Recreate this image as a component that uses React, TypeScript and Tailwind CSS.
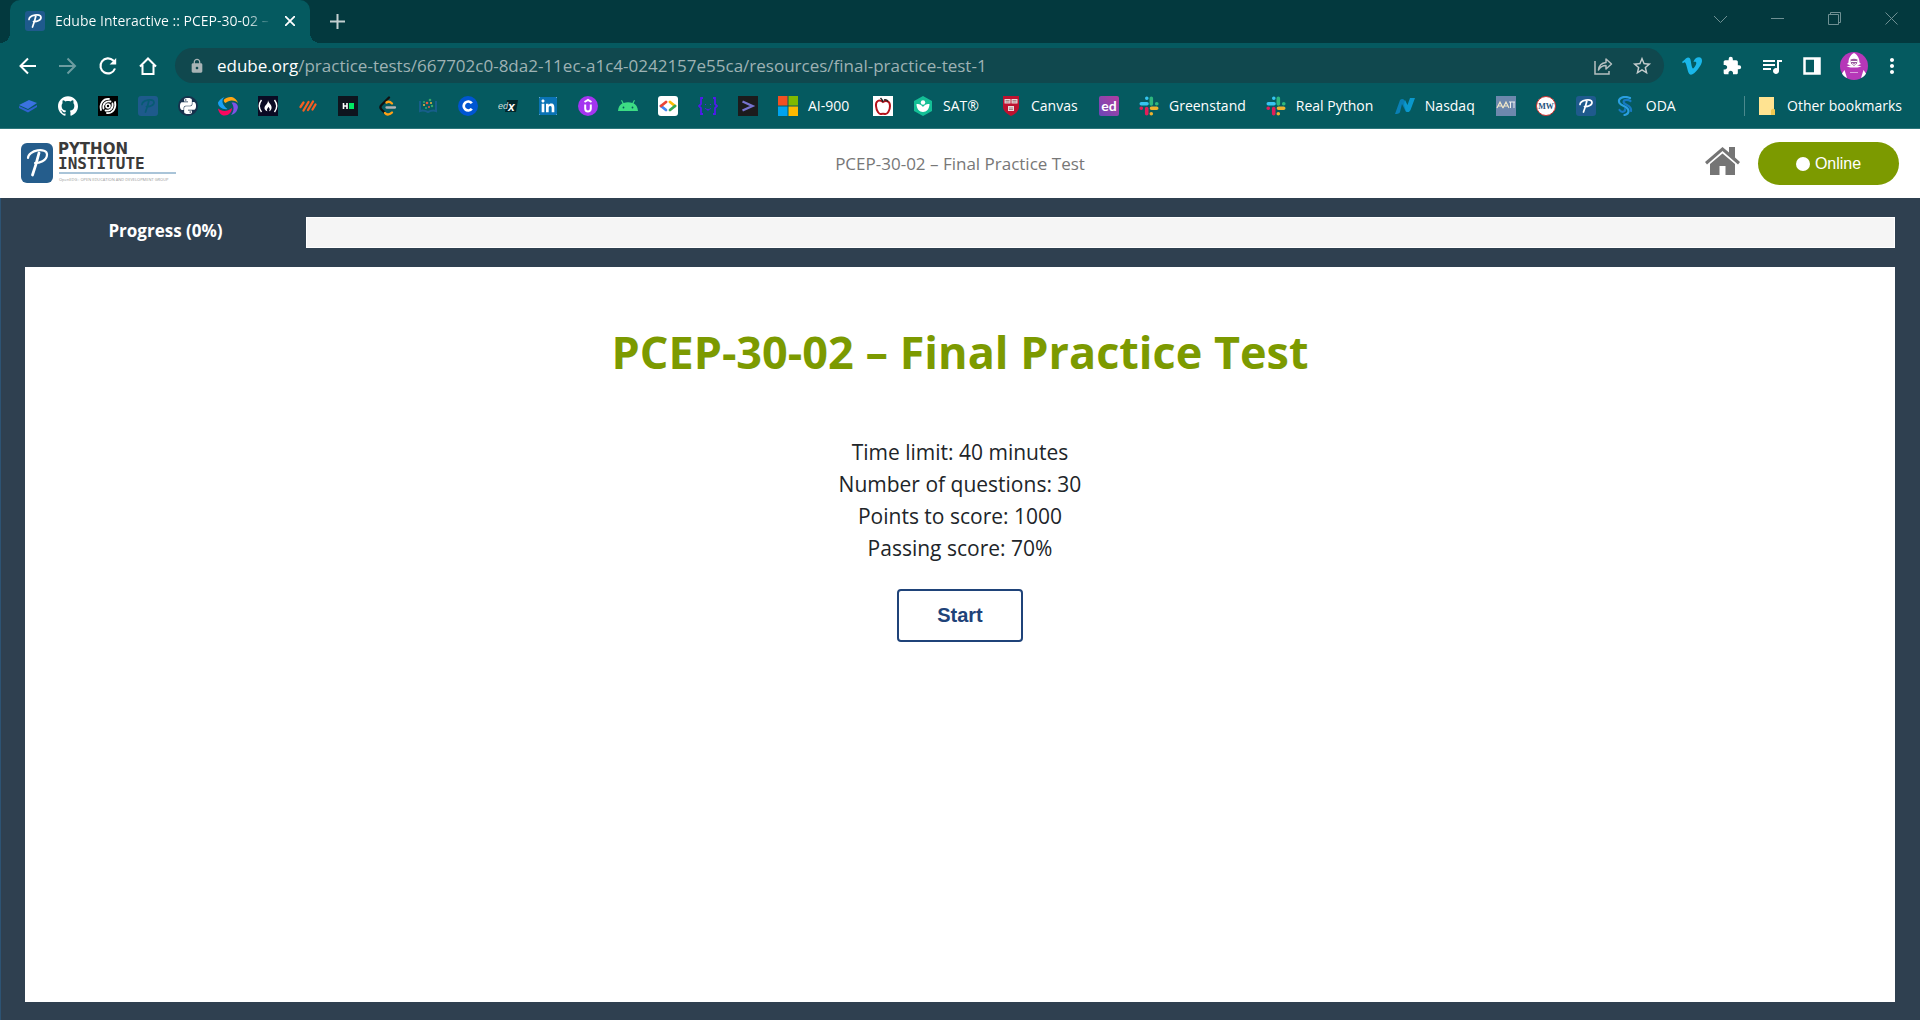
import React from "react";
import { SiGithub, SiPython, SiVimeo, SiLinkedin } from "react-icons/si";
import { MdLock, MdStarOutline, MdExtension, MdQueueMusic, MdMoreVert } from "react-icons/md";

function PMark({ bg, fg }: { bg: string; fg: string }) {
  return (
    <svg viewBox="0 0 20 20" className="size-5 shrink-0" aria-hidden="true">
      <rect width="20" height="20" rx="3" fill={bg} />
      <path d="M4 8.500C4 4 15.500 2 16 6C16.300 9.500 11 11 8.500 10.500M11 4.500C10 9 9 12 7.500 16" fill="none" stroke={fg} strokeWidth="1.700" strokeLinecap="round" />
    </svg>
  );
}

function Box({ children }: { children: React.ReactNode }) {
  return (
    <svg viewBox="0 0 20 20" className="size-5 shrink-0" aria-hidden="true">
      {children}
    </svg>
  );
}

function Slack() {
  return (
    <Box>
      <g strokeWidth="3.600" strokeLinecap="round">
        <path d="M2.300 7.700H8M7.800 2.200V2.300" stroke="#36c5f0" />
        <path d="M12.300 2.300V8M17.800 7.800H17.700" stroke="#2eb67d" />
        <path d="M12.500 12.300H17.700M12.300 17.700V17.800" stroke="#ecb22e" />
        <path d="M7.700 12.500V17.700M2.200 12.300H2.300" stroke="#e01e5a" />
      </g>
    </Box>
  );
}

type Mark = { name: string; label?: string; width?: string; icon: React.ReactNode };

const marks: Mark[] = [
  { name: "Courses", icon: <Box><path d="M1 9 11 4l8 3-9 6z" fill="#3b72e0" /><path d="m1 10 9 4 9-5v2l-9 5.500L1 12z" fill="#2f62cf" /></Box> },
  { name: "GitHub", icon: <SiGithub className="size-5 shrink-0 text-white" /> },
  { name: "Spiral", icon: <Box><rect width="20" height="20" fill="#000" /><g fill="none" stroke="#fff" strokeLinecap="round"><circle cx="10" cy="10" r="2" strokeWidth="1.600" /><path d="M3 14C1.500 8 5 2.500 11 3M17 6c1.500 6-2 11.500-8 11" strokeWidth="1.800" /><path d="M5.500 12.500C4.500 8 8 4.500 12.500 5.500M14.500 7.500c1 4.500-2.500 8-7 7" strokeWidth="1.800" /></g></Box> },
  { name: "Python Institute", icon: <PMark bg="#1e5a8c" fg="#075b73" /> },
  { name: "PySchool", icon: <span className="grid size-5 shrink-0 place-items-center rounded-full bg-[#17324d]"><SiPython className="size-4 text-white" /></span> },
  { name: "Sololearn", icon: <Box><path d="M6.500 1C3 4 4 9 9.500 13 5 14 0 11 0 6.500 1.500 4 3.500 2 6.500 1z" fill="#18a0f5" /><path d="M6 3.500C10 0 17-1 20 7c-4-3.500-9-3-12.500 0C6 6.500 5.500 5 6 3.500z" fill="#ffa514" /><path d="M13.500 6.500C18 6 21 9 19.500 13c-.8 3-3.500 5.500-6.500 6 3-3.500 3.500-8 .5-12.500z" fill="#7d52e6" /><path d="M0 12.500c4 3 9 3.500 14-.5C14 17 9 21 4 19 2 18 .5 15.500 0 12.500z" fill="#f8075f" /></Box> },
  { name: "freeCodeCamp", icon: <Box><rect width="20" height="20" fill="#0a0a23" /><g fill="none" stroke="#fff" strokeWidth="1.400"><path d="M3.500 4C.5 8 .5 12 3.500 16M16.500 4c3 4 3 8 0 12" /></g><path d="M10 4c0 3 4.500 5 3.500 8.500-.4 1.700-1.500 2.500-2.500 2.700 1.500-2 .5-3-.8-4.400C10 13 8 13 9.500 15.200 5 14 6.500 10 8 9c1.500-1.500 2-3 2-5z" fill="#fff" /></Box> },
  { name: "Stripes", icon: <Box><g stroke="#f65e22" strokeWidth="2.300" strokeLinecap="round"><path d="m2.500 11 3-4.500M5.500 14.500l5-8.500M10 14l5-8.500M14.500 13.500l3-5" /></g></Box> },
  { name: "HackerRank", icon: <Box><rect width="20" height="20" fill="#0e141e" /><path d="M5.500 7v6M9 7v6M5.500 10H9" stroke="#fff" strokeWidth="1.600" /><path d="M11 7h5v6h-5z" fill="#00ea64" /></Box> },
  { name: "LeetCode", icon: <Box><g fill="none" strokeWidth="2.300" strokeLinecap="round" strokeLinejoin="round"><path d="M11 1.500 3.500 9c-1.500 1.500-1.500 3 0 4.500L7 17" stroke="#111" /><path d="M8.500 6.500c2-1.500 3.500-1 5.500 1M7 17c2 2.500 5 1.500 7-.5" stroke="#ffa116" /><path d="M8.500 11.500H17" stroke="#b3b3b3" /></g></Box> },
  { name: "Open Book", icon: <Box><path d="M2 5v10c3-1 6 0 8 1 2-1 5-2 8-1V5" fill="none" stroke="#175e8a" strokeWidth="2" /><g fill="#35a86b"><circle cx="6" cy="6" r="1" /><circle cx="12" cy="4" r="1.300" /><circle cx="14" cy="10" r="1.200" /><circle cx="8" cy="12" r="1" /></g><g fill="#e9593e"><circle cx="9" cy="7" r="1.300" /><circle cx="11" cy="11" r="1" /></g><g fill="#e8b640"><circle cx="13" cy="7" r="1" /><circle cx="6" cy="9" r="1" /></g></Box> },
  { name: "Coursera", icon: <Box><circle cx="10" cy="10" r="10" fill="#0056d2" /><path d="M13.800 7.300a4.500 4.500 0 1 0 0 5.400" fill="none" stroke="#fff" strokeWidth="2.700" /></Box> },
  { name: "edX", icon: <Box><path d="M9 4h11l-2 12H7z" fill="#02262b" /><text x="0" y="12.500" fontSize="9" fontStyle="italic" fill="#d5dddd" fontFamily="Liberation Sans">ed</text><text x="10" y="15" fontSize="12" fontStyle="italic" fontWeight="bold" fill="#fff" fontFamily="Liberation Sans">x</text></Box> },
  { name: "LinkedIn", icon: <span className="grid size-5 shrink-0 place-items-center"><SiLinkedin className="size-[18px] bg-white text-[#0a73b5]" /></span> },
  { name: "Udemy", icon: <Box><circle cx="10" cy="10" r="10" fill="#a435f0" /><path d="M6.500 6 10 4l3.500 2M7.200 8.500v4c0 4 5.600 4 5.600 0v-4" fill="none" stroke="#fff" strokeWidth="2" /></Box> },
  { name: "Android", icon: <Box><path d="M0 15c.3-4 2-6.500 4.500-7.700L3 4.500l1-.5 1.600 2.900c3-1 6-1 8.800 0L16 4l1 .5-1.500 2.800C18 8.500 19.700 11 20 15z" fill="#3ddc84" /><circle cx="5.500" cy="11.500" r=".9" fill="#055a60" /><circle cx="14.500" cy="11.500" r=".9" fill="#055a60" /></Box> },
  { name: "Google Developers", icon: <Box><rect width="20" height="20" rx="3" fill="#fff" /><g fill="none" strokeWidth="2.800" strokeLinecap="round"><path d="m12 6 5 4" stroke="#fbbc04" /><path d="m17 10-5 4" stroke="#34a853" /><path d="m3 10 5 4" stroke="#4285f4" /><path d="m8 6-5 4" stroke="#ea4335" /></g></Box> },
  { name: "Braces", icon: <Box><g fill="none" stroke="#5119ee" strokeWidth="1.800"><path d="M5 2H3v6l-2 2 2 2v6h2M15 2h2v6l2 2-2 2v6h-2" /><path d="M7 12c1 2 5 2 6 0M7.500 8v1M12.500 8v1M10 14v1" strokeWidth="1" /></g></Box> },
  { name: "Terminal", icon: <Box><rect width="20" height="20" fill="#1c1b1c" /><path d="m4.500 5.500 10 4.500-10 4.500" fill="none" stroke="#7773cf" strokeWidth="2.300" /></Box> },
  { name: "AI-900", label: "AI-900", width: "min-w-[45px]", icon: <Box><path d="M0 0h9.500v9.500H0z" fill="#f25022" /><path d="M10.500 0H20v9.500h-9.500z" fill="#7fba00" /><path d="M0 10.500h9.500V20H0z" fill="#00a4ef" /><path d="M10.500 10.500H20V20h-9.500z" fill="#ffb900" /></Box> },
  { name: "Apple", icon: <Box><rect width="20" height="20" fill="#fff" /><path d="M10 6C6 3 2.500 5 3 10c.5 5 3 8.500 5 8 1.500-.5 2.500-.5 4 0 2.500.5 5-4 5-8 0-5-4-6-7-4z" fill="none" stroke="#b5121b" strokeWidth="2" /><path d="M10 6c-.5-2-1.500-3-2.500-4M11 4c2-.5 3 0 4 1.500" fill="none" stroke="#222" strokeWidth="1.500" /></Box> },
  { name: "SAT", label: "SAT®", width: "min-w-[38px]", icon: <Box><path d="m10 0 9 5v10l-9 5-9-5V5z" fill="#14bf96" /><circle cx="10" cy="6.500" r="2.200" fill="#fff" /><path d="M3.500 8c4 0 5.500 1.500 6.500 3 1-1.500 2.500-3 6.500-3 0 5-3 8-6.500 8S3.500 13 3.500 8z" fill="#fff" /></Box> },
  { name: "Canvas", label: "Canvas", width: "min-w-[48px]", icon: <Box><path d="M2 0h16v11c0 4-4 7-8 9-4-2-8-5-8-9z" fill="#bd1230" /><g fill="#e8dcdc"><path d="M3.500 3h6v4.500h-6zM10.500 3h6v4.500h-6zM7 10h6v5H7z" /></g><path d="M4.500 4.500h4M11.500 4.500h4M4.500 6h4M11.500 6h4M8 12h4M8 13.500h4" stroke="#8b5a60" strokeWidth=".7" /></Box> },
  { name: "Ed", icon: <span className="grid size-5 shrink-0 place-items-center rounded-xs bg-linear-to-tr from-[#6a45b8] to-[#b23aa0] font-['Lato'] text-sm leading-none font-bold text-white">ed</span> },
  { name: "Greenstand", label: "Greenstand", width: "min-w-[76px]", icon: <Slack /> },
  { name: "Real Python", label: "Real Python", width: "min-w-[79px]", icon: <Slack /> },
  { name: "Nasdaq", label: "Nasdaq", width: "min-w-[51px]", icon: <Box><path d="M5 4c2-2 4-1 5 1l4 11h-3l-4-8-2 8c-.5 1.500-2 2-5 2z" fill="#0a7fb5" /><path d="M15 2h5l-4.500 12c-1 2.500-4 3-5 0L9 9l1-5 2.500 5z" fill="#0a98cc" /></Box> },
  { name: "AAII", icon: <Box><rect width="20" height="20" fill="#6d88ad" /><path d="m1 12 3-6 3 6M2 10h4m1 2 3-6 3 6M8 10h4" fill="none" stroke="#eee5c8" strokeWidth="1.200" /><path d="M14.500 6v6M18 6v6M13 6h6" stroke="#eee" strokeWidth="1" /></Box> },
  { name: "MarketWatch", icon: <Box><circle cx="10" cy="10" r="9.500" fill="#fff" stroke="#d3312f" /><text x="10" y="13" textAnchor="middle" fontSize="8" fontFamily="Liberation Serif" fontWeight="bold" fill="#27527d">MW</text></Box> },
  { name: "OpenEDG", icon: <PMark bg="#1f5a8d" fg="#fff" /> },
  { name: "ODA", label: "ODA", icon: <Box><g fill="none" strokeLinecap="round"><path d="M14 2C8-.5 1 2 3.500 7c2 3.500 9 3 9 8 0 2-2 3.500-4 4" stroke="#2a9fe0" strokeWidth="2.200" /><path d="M14.500 5C11 3 6 4 8 7c2 2.500 8 2.500 7 8M3.500 14c2 3 6 2 5.500-1" stroke="#1779c2" strokeWidth="2.200" /></g></Box> },
];

function TabStrip() {
  return (
    <div className="flex h-[43px] items-end bg-[#03393e]">
      <span className="size-2.5 bg-[radial-gradient(circle_at_0_0,#03393e_10px,#055a60_10px)]" />
      <div className="flex h-full w-[300px] items-center rounded-t-[10px] bg-[#055a60] pr-2.5 pb-0.5 pl-[15px]">
        <PMark bg="#1f5a8d" fg="#fff" />
        <span className="ml-2.5 flex-1 overflow-hidden bg-linear-to-r from-white from-88% to-transparent bg-clip-text text-sm whitespace-nowrap text-transparent">
          Edube Interactive :: PCEP-30-02 –
        </span>
        <button aria-label="Close tab" className="ml-2 grid size-5 place-items-center">
          <svg viewBox="0 0 10 10" className="size-2.5" stroke="#fff" strokeWidth="1.800"><path d="m0 0 10 10M10 0 0 10" /></svg>
        </button>
      </div>
      <span className="size-2.5 bg-[radial-gradient(circle_at_100%_0,#03393e_10px,#055a60_10px)]" />
      <button aria-label="New tab" className="ml-2.5 grid h-full w-[15px] place-items-center">
        <svg viewBox="0 0 15 15" className="size-[15px]" stroke="#c3cfd0" strokeWidth="2"><path d="M7.500 0v15M0 7.500h15" /></svg>
      </button>
      <div className="ml-auto flex h-full items-center gap-[44px] pr-[22px] pb-1.5">
        {[
          ["Search tabs", "M0 4 6.500 10.500 13 4"],
          ["Minimize", "M0 6.500h13"],
          ["Restore", "M.5 2.500h10v10H.5zM2.500 2.500v-2h10v10h-2"],
          ["Close", "m.5.5 12 12m0-12-12 12"],
        ].map(([name, d]) => (
          <button key={name} aria-label={name}>
            <svg viewBox="0 0 13 13" className="size-[13px]" fill="none" stroke="#6f9093"><path d={d} /></svg>
          </button>
        ))}
      </div>
    </div>
  );
}

function Toolbar() {
  return (
    <div className="flex h-[45px] items-center bg-[#055a60] pr-4 text-white">
      <nav aria-label="Browser" className="flex w-[175px] gap-5 pl-[18px]">
        <button aria-label="Back"><Box><path d="M18 10H3M10 2.500 2.500 10l7.500 7.500" fill="none" stroke="#fff" strokeWidth="2" /></Box></button>
        <button aria-label="Forward"><Box><path d="M1 10h15M9.500 2.500 17 10l-7.500 7.500" fill="none" stroke="#6c9da1" strokeWidth="2" /></Box></button>
        <button aria-label="Reload"><Box><path d="M17 12.500A7.500 7.500 0 1 1 15.300 4.600L17 6.500" fill="none" stroke="#fff" strokeWidth="2.100" /><path d="M18.200 2v6.600h-6.600z" fill="#fff" /></Box></button>
        <button aria-label="Home"><Box><path d="M2 10.500 10 2.500l8 8M4.500 9v9h11V9" fill="none" stroke="#fff" strokeWidth="2" /></Box></button>
      </nav>
      <div className="flex h-[35px] flex-1 items-center rounded-full bg-[#10484e] pr-[11px] pl-3.5">
        <MdLock className="size-4 text-[#a9b4b6]" />
        <div className="ml-3 flex-1 text-[17px] leading-6 text-[#9eb2b4]">
          <span className="text-white">edube.org</span>/practice-tests/667702c0-8da2-11ec-a1c4-0242157e55ca/resources/final-practice-test-1
        </div>
        <button aria-label="Share" className="mr-[18px]">
          <Box><path d="M2 5v13h14v-3" fill="none" stroke="#b5bfc0" strokeWidth="1.500" /><path d="M5.500 14C6 9 9 7 13 6.500V3l5.500 5-5.500 5v-3.500c-3 0-5.500 1-7.500 4.500z" fill="none" stroke="#b5bfc0" strokeWidth="1.500" strokeLinejoin="round" /></Box>
        </button>
        <button aria-label="Bookmark this tab"><MdStarOutline className="size-[22px] text-[#c5cdce]" /></button>
      </div>
      <div className="flex items-center">
        <button aria-label="Vimeo" className="ml-[18px]"><SiVimeo className="size-5 text-[#1ab7ea]" /></button>
        <button aria-label="Extensions" className="ml-5"><MdExtension className="size-5" /></button>
        <button aria-label="Media" className="ml-[18px]"><MdQueueMusic className="size-6" /></button>
        <button aria-label="Side panel" className="ml-[18px]"><Box><path d="M2.500 2.500h15v15h-15z" fill="none" stroke="#fff" strokeWidth="2.500" /><path d="M12 2h6v16h-6z" fill="#fff" /></Box></button>
        <button aria-label="Profile" className="ml-[18px]">
          <svg viewBox="0 0 28 28" className="size-7">
            <circle cx="14" cy="14" r="14" fill="#b637b8" />
            <path d="M14 1c-4 2-5.500 6-5.500 9.500L7 12l7 3 7-3-1.500-1.500C19.500 7 18 3 14 1z" fill="#fff" />
            <path d="M10.500 7.500c2-1 5-1 7 0l-.5 4-3 2.500-3-2.500z" fill="#9a5a9e" />
            <path d="M11 9.500h6M12 11.500l2 1 2-1" stroke="#fff" fill="none" />
            <path d="M6.500 14.500 12 13l2 1.500 2-1.500 5.500 1.500-4 1h-7z" fill="#fff" />
            <path d="M4.500 18 7 26c-2-.8-4-2.500-5-4.500zM23.500 18 21 26c2-.8 4-2.500 5-4.500z" fill="#fff" />
            <path d="M10 20.500h8" stroke="#dba0dd" />
          </svg>
        </button>
        <button aria-label="Menu" className="ml-3"><MdMoreVert className="size-6" /></button>
      </div>
    </div>
  );
}

function Bookmarks() {
  return (
    <nav aria-label="Bookmarks" className="flex h-[41px] items-center border-b border-[#2f777c] bg-[#055a60] pr-[18px] pb-1 pl-2 text-sm text-white">
      {marks.map((m) => (
        <a key={m.name} href="#" aria-label={m.name} className="flex items-center gap-2.5 px-2.5 whitespace-nowrap">
          {m.icon}
          {m.label && <span className={m.width}>{m.label}</span>}
        </a>
      ))}
      <span className="ml-auto h-5 w-px bg-[#4b898d]" />
      <a href="#" className="ml-3.5 flex items-center gap-3 whitespace-nowrap">
        <svg viewBox="0 0 16 18" className="h-[18px] w-4"><path d="M0 0h15v12l1 1v5H0z" fill="#ffe391" /><path d="M12 18v-5l2-1.500 2 1.500v5z" fill="#f0c850" /></svg>
        Other bookmarks
      </a>
    </nav>
  );
}

function Logo() {
  return (
    <a href="#" aria-label="Python Institute" className="flex">
      <svg viewBox="0 0 156 41" className="h-[41px] w-[156px] overflow-visible">
        <rect width="32" height="40" rx="6" fill="#255d8c" />
        <path d="M7 15C7 7 26 4 26 11.500C26 18 18 20 14 20" fill="none" stroke="#fff" strokeWidth="2.200" strokeLinecap="round" />
        <path d="M18 10C16 18 14 25 11.500 32" fill="none" stroke="#fff" strokeWidth="2.800" strokeLinecap="round" />
        <g fill="#3a3a3a" fontFamily="DejaVu Sans" fontWeight="bold">
          <text x="37" y="11" fontSize="15">PYTHON</text>
          <text x="37" y="26" fontSize="16" fontFamily="DejaVu Sans Mono">INSTITUTE</text>
        </g>
        <path d="M38 30h117" stroke="#a9c4d8" strokeWidth="2" />
        <text x="38" y="38" fontSize="4" fill="#999" fontFamily="Open Sans">OpenEDG : OPEN EDUCATION AND DEVELOPMENT GROUP</text>
      </svg>
    </a>
  );
}

export default function App() {
  return (
    <div className="flex min-h-screen flex-col bg-[#2f4050] font-['Open_Sans',sans-serif]">
      <TabStrip />
      <Toolbar />
      <Bookmarks />
      <header className="grid h-[69px] grid-cols-3 items-center bg-white px-[21px]">
        <Logo />
        <h2 className="text-center text-[17px] leading-6 text-[#777]">PCEP-30-02 – Final Practice Test</h2>
        <div className="flex items-center justify-end gap-[18px]">
          <a href="#" aria-label="Home" className="pb-1.5">
            <svg viewBox="0 0 35 28" className="h-7 w-[35px] fill-[#757575]"><path d="M17.500 0 24 5.500V0h6v10.500l5 4.500-2 2.500L17.500 4 2 17.500 0 15z" /><path d="M17.500 6.500 30 17v11h-9.500v-9h-6v9H5V17z" /></svg>
          </a>
          <button className="flex h-[43px] w-[141px] items-center justify-center gap-[5px] rounded-full bg-[#7c9a00] font-['Liberation_Sans',sans-serif] text-base text-white">
            <span className="size-3.5 rounded-full bg-white" />
            Online
          </button>
        </div>
      </header>
      <main className="flex flex-1 flex-col border-l border-[#2d5373] pt-[19px] pr-[25px] pb-[18px] pl-6">
        <div className="flex items-start">
          <span id="progress-label" className="w-[281px] text-center text-[17px] leading-7 font-bold text-white">Progress (0%)</span>
          <div role="progressbar" aria-labelledby="progress-label" aria-valuenow={0} className="h-[31px] flex-1 border border-white bg-[#f5f5f5]" />
        </div>
        <section className="mt-[19px] flex flex-1 flex-col items-center bg-white pt-[53px] text-center text-[#212529]">
          <h1 className="text-[45px] leading-[64px] font-bold text-[#7c9a00]">PCEP-30-02 – Final Practice Test</h1>
          <div className="mt-[52px] text-[21px] leading-8">
            <p>Time limit: 40 minutes</p>
            <p>Number of questions: 30</p>
            <p>Points to score: 1000</p>
            <p>Passing score: 70%</p>
          </div>
          <button className="mt-[25px] h-[53px] w-[126px] rounded-sm border-2 border-[#1f4379] bg-white pb-0.5 font-['Liberation_Sans',sans-serif] text-xl font-bold text-[#1f4379]">Start</button>
        </section>
      </main>
    </div>
  );
}
